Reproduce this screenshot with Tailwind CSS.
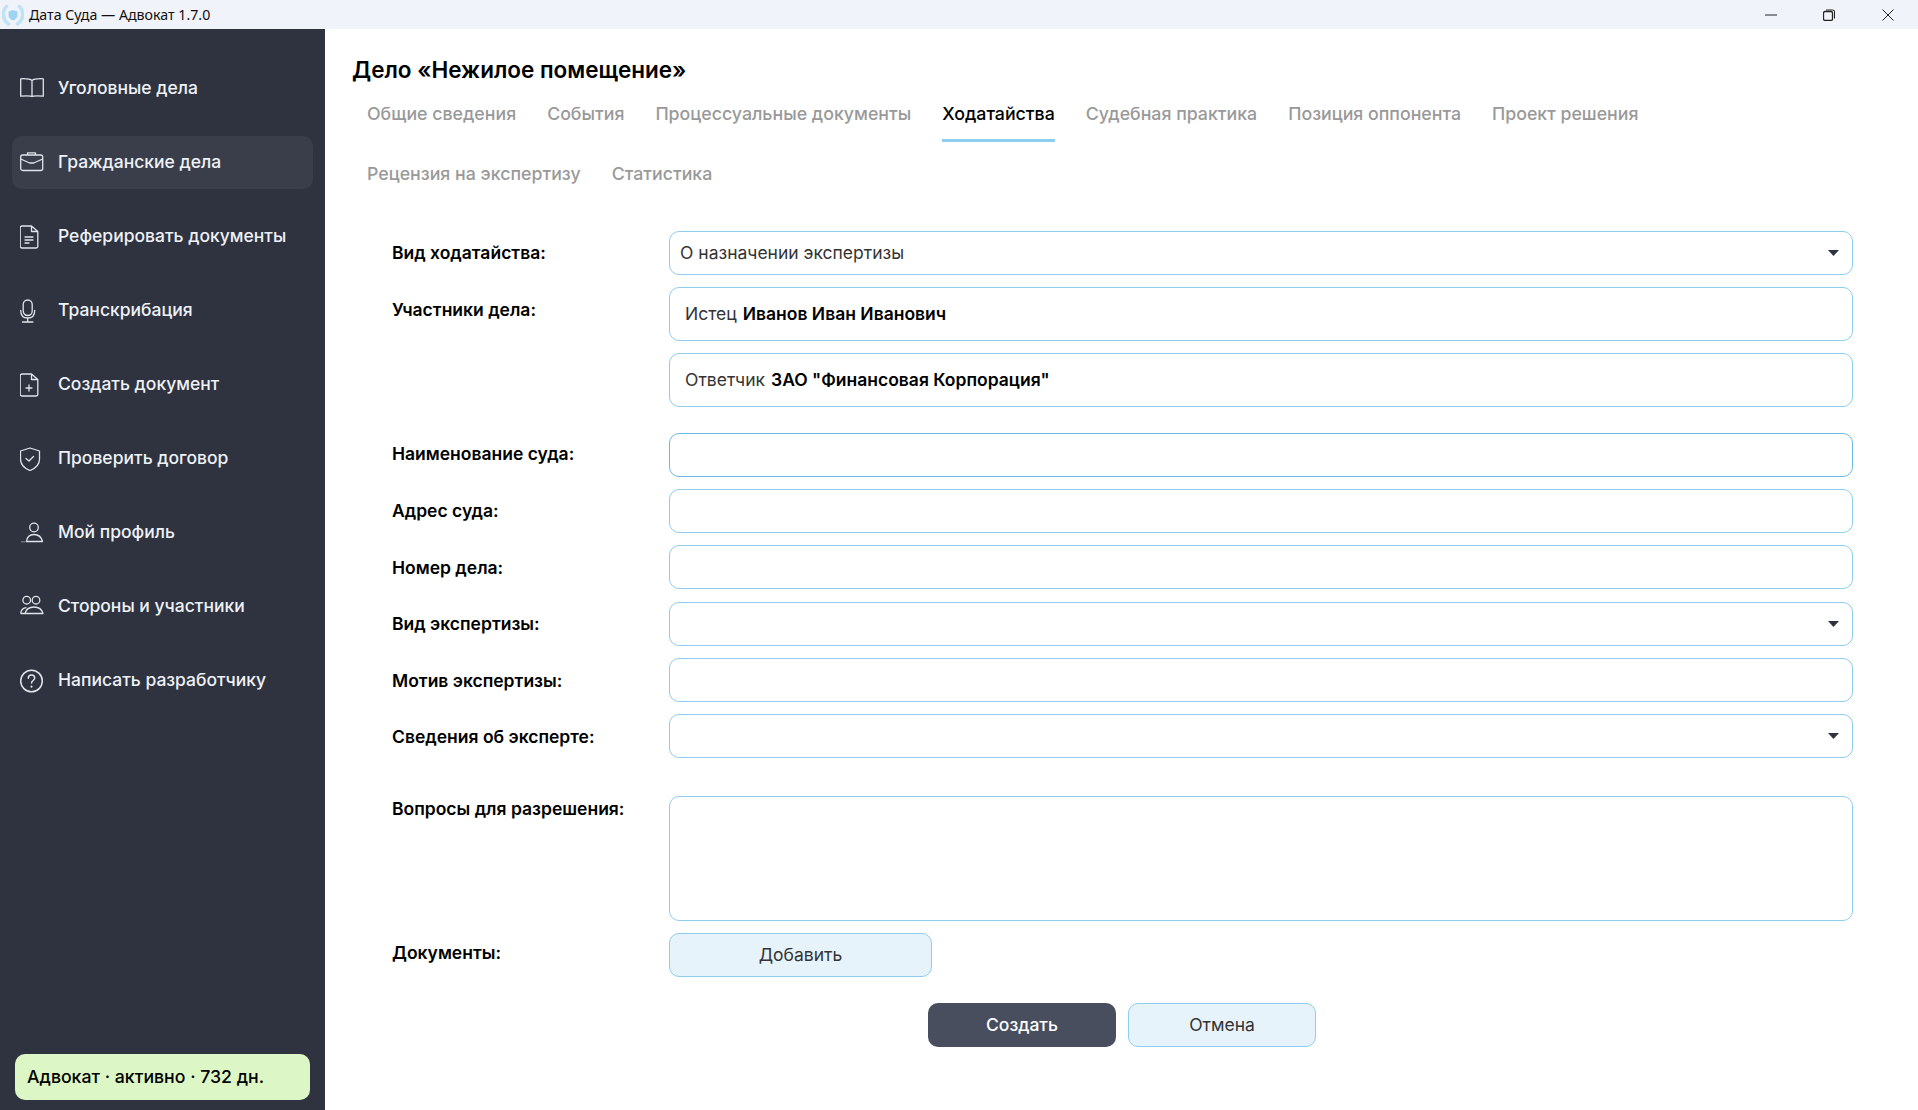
<!DOCTYPE html>
<html lang="ru"><head><meta charset="utf-8"><title>Дата Суда — Адвокат 1.7.0</title>
<script src="https://cdn.jsdelivr.net/npm/@tailwindcss/browser@4"></script></head>
<body class="m-0 h-[1110px] w-[1918px] overflow-hidden bg-white font-['Inter',sans-serif] text-[17.5px] text-black">
<header class="flex h-[29px] items-center bg-[#f0f3f9] pl-[2px]">
  <svg class="h-[22px] w-[22px]" viewBox="0 0 22 22" fill="none"><path d="M4.500 2.500C0 7 0 15.500 6.500 20M17.500 2.500c4.500 4.500 4.500 13-2 17.500" stroke="#bfe2f6" stroke-width="3.500" stroke-linecap="round"/><path d="M11 6l4.500 1.500v4c0 2.500-2.200 4-4.500 5-2.300-1-4.500-2.500-4.500-5v-4z" fill="#9ed4f2"/></svg>
  <span class="ml-[5px] font-['Noto_Sans',sans-serif] text-[14.2px] text-[#111]">Дата Суда — Адвокат 1.7.0</span>
  <div class="ml-auto flex items-center">
    <svg class="mr-[46px] h-[12px] w-[12px]" viewBox="0 0 12 12"><path d="M0 6h12" stroke="#222" stroke-width="1"/></svg>
    <svg class="mr-[47px] h-[12px] w-[12px]" viewBox="0 0 12 12" fill="none" stroke="#222"><rect x=".5" y="2.500" width="9" height="9" rx="1.500" stroke-width="1.300"/><path d="M3 1h6.500A1.800 1.800 0 0 1 11.500 3v6.500" stroke-width="1"/></svg>
    <svg class="mr-[24px] h-[12px] w-[12px]" viewBox="0 0 12 12"><path d="M.5.500l11 11M11.500.500l-11 11" stroke="#222" stroke-width="1"/></svg>
  </div>
</header>
<div class="flex h-[1081px]">
  <aside class="flex w-[325px] shrink-0 flex-col bg-[#2f333f] px-[12px] pt-[33px] pb-[10px] font-medium text-[#eef2f7]">
    <nav class="flex flex-col gap-[21px]">
      <a class="flex h-[53px] items-center gap-[14px] rounded-[10px] pl-[8px]"><svg class="h-[24px] w-[24px] shrink-0" viewBox="0 0 24 24" fill="none" stroke="#dfe4ea" stroke-width="1.300" stroke-linejoin="round"><path d="M12 3.500C10 1.800 6 1.500 .7 1.800v17.400C6 18.800 10 18.500 12 19.500c2-1 6-.7 11.300-.3V1.800C18 1.500 14 1.800 12 3.500zM12 3.500v16"/></svg>Уголовные дела</a>
      <a class="flex h-[53px] items-center gap-[14px] rounded-[10px] bg-[#3a3e4a] pl-[8px]"><svg class="h-[24px] w-[24px] shrink-0" viewBox="0 0 24 24" fill="none" stroke="#dfe4ea" stroke-width="1.300" stroke-linejoin="round"><rect x=".7" y="4" width="22" height="15.500" rx="2"/><path d="M7.500 4V1.800h8V4M.7 8l9 4h4l9-4"/></svg>Гражданские дела</a>
      <a class="flex h-[53px] items-center gap-[14px] rounded-[10px] pl-[8px]"><svg class="h-[24px] w-[24px] shrink-0" viewBox="0 0 24 24" fill="none" stroke="#dfe4ea" stroke-width="1.300" stroke-linejoin="round" stroke-linecap="round"><path d="M11.500 1H2a1.800 1.800 0 0 0-1.800 1.800v18.400A1.800 1.800 0 0 0 2 23h14a1.800 1.800 0 0 0 1.800-1.800V6.500zM11.500 1v5.500h6.300M5 12h8M5 15h8M5 18h4"/></svg>Реферировать документы</a>
      <a class="flex h-[53px] items-center gap-[14px] rounded-[10px] pl-[8px]"><svg class="h-[24px] w-[24px] shrink-0" viewBox="0 0 24 24" fill="none" stroke="#dfe4ea" stroke-width="1.300" stroke-linecap="round"><rect x="3.200" y="1" width="9" height="15.500" rx="4.500"/><path d="M.7 11.500c0 5 3 7.500 7 7.500s7-2.500 7-7.500M7.700 19v4M2.500 23h10.400"/></svg>Транскрибация</a>
      <a class="flex h-[53px] items-center gap-[14px] rounded-[10px] pl-[8px]"><svg class="h-[24px] w-[24px] shrink-0" viewBox="0 0 24 24" fill="none" stroke="#dfe4ea" stroke-width="1.300" stroke-linejoin="round" stroke-linecap="round"><path d="M11.500 1H2a1.800 1.800 0 0 0-1.800 1.800v18.400A1.800 1.800 0 0 0 2 23h14a1.800 1.800 0 0 0 1.800-1.800V6.500zM11.500 1v5.500h6.300M9 12v6M6 15h6"/></svg>Создать документ</a>
      <a class="flex h-[53px] items-center gap-[14px] rounded-[10px] pl-[8px]"><svg class="h-[24px] w-[24px] shrink-0" viewBox="0 0 24 24" fill="none" stroke="#dfe4ea" stroke-width="1.300" stroke-linejoin="round" stroke-linecap="round"><path d="M10 1l9.500 3v8c0 6-4.200 9.500-9.500 11.500C4.700 21.500.5 18 .5 12V4zM6 11.500l3 2.500 4.500-4.500"/></svg>Проверить договор</a>
      <a class="flex h-[53px] items-center gap-[14px] rounded-[10px] pl-[8px]"><svg class="h-[24px] w-[24px] shrink-0" viewBox="0 0 24 24" fill="none" stroke="#dfe4ea" stroke-width="1.300" stroke-linejoin="round"><circle cx="14" cy="6.500" r="4.300"/><path d="M6.500 20.500c.5-4 3-7 7.500-7s7.500 3 8.500 7z"/><path d="M1 20.800h5.500" stroke-width=".8" stroke="#9aa0ab"/></svg>Мой профиль</a>
      <a class="flex h-[53px] items-center gap-[14px] rounded-[10px] pl-[8px]"><svg class="h-[24px] w-[24px] shrink-0" viewBox="0 0 24 24" fill="none" stroke="#dfe4ea" stroke-width="1.300" stroke-linejoin="round"><circle cx="6.700" cy="5.200" r="3.800"/><circle cx="16" cy="5.200" r="3.800"/><path d="M5 18.500c1-4 4-6.500 9-6.500s8 2.500 9 6.500zM.7 18.500H5M.7 18.500c.3-3 2.500-5.500 5.800-5.800"/></svg>Стороны и участники</a>
      <a class="flex h-[53px] items-center gap-[14px] rounded-[10px] pl-[8px]"><svg class="h-[24px] w-[24px] shrink-0" viewBox="0 0 24 24" fill="none" stroke="#dfe4ea" stroke-width="1.500" stroke-linecap="round"><circle cx="11.500" cy="12" r="10.800"/><path d="M8.300 9.200c0-2 1.500-3.200 3.200-3.200s3.200 1.200 3.200 3c0 2.500-3.200 2.500-3.200 5"/><path d="M11.500 17.500v.3" stroke-width="2"/></svg>Написать разработчику</a>
    </nav>
    <div class="mx-[3px] mt-auto flex h-[46px] items-center rounded-[10px] bg-[#dcf7c5] pl-[12px] text-[17.7px] text-black">Адвокат · активно · 732 дн.</div>
  </aside>
  <main class="min-w-0 flex-1 pl-[27px] pr-[65px]">
    <h1 class="mt-[26px] text-[22.5px] leading-[30px] font-semibold">Дело «Нежилое помещение»</h1>
    <div class="flex h-[56px] items-start gap-[31px] pl-[15px] pt-[16px] text-[17.75px] font-medium text-[#999]">
      <span>Общие сведения</span><span>События</span><span>Процессуальные документы</span>
      <span class="h-[41px] border-b-[3px] border-[#8ecdf0] text-black">Ходатайства</span>
      <span>Судебная практика</span><span>Позиция оппонента</span><span>Проект решения</span>
    </div>
    <div class="flex h-[60px] items-center gap-[31px] pl-[15px] pt-[6px] text-[17.75px] font-medium text-[#999]"><span>Рецензия на экспертизу</span><span>Статистика</span></div>
    <form class="ml-[40px] mt-[30px] grid grid-cols-[277px_1fr] gap-y-[12px]">
      <label class="pt-[9px] font-semibold">Вид ходатайства:</label>
      <div class="flex h-[44px] items-center justify-between rounded-[10px] border border-[#8ecdf0] pl-[10px] pr-[13px] text-[#333]">О назначении экспертизы<svg class="h-[6px] w-[11px]" viewBox="0 0 11 6"><path d="M0 0h11L5.500 6z" fill="#2f333f"/></svg></div>
      <label class="pt-[10px] font-semibold">Участники дела:</label>
      <div class="flex flex-col gap-[12px]">
        <div class="flex h-[54px] items-center rounded-[10px] border border-[#8ecdf0] pl-[15px] text-[#333]">Истец<b class="ml-[6px] font-semibold text-black">Иванов Иван Иванович</b></div>
        <div class="flex h-[54px] items-center rounded-[10px] border border-[#8ecdf0] pl-[15px] text-[#333]">Ответчик<b class="ml-[6px] font-semibold text-black">ЗАО "Финансовая Корпорация"</b></div>
      </div>
      <label class="mt-[14px] pt-[8px] font-semibold">Наименование суда:</label>
      <div class="mt-[14px] h-[44px] rounded-[10px] border border-[#6cb9e6]"></div>
      <label class="pt-[9px] font-semibold">Адрес суда:</label>
      <div class="h-[44px] rounded-[10px] border border-[#8ecdf0]"></div>
      <label class="pt-[10px] font-semibold">Номер дела:</label>
      <div class="h-[44px] rounded-[10px] border border-[#8ecdf0]"></div>
      <label class="mt-[1px] pt-[9px] font-semibold">Вид экспертизы:</label>
      <div class="mt-[1px] flex h-[44px] items-center justify-end rounded-[10px] border border-[#8ecdf0] pr-[13px]"><svg class="h-[6px] w-[11px]" viewBox="0 0 11 6"><path d="M0 0h11L5.500 6z" fill="#2f333f"/></svg></div>
      <label class="pt-[10px] font-semibold">Мотив экспертизы:</label>
      <div class="h-[44px] rounded-[10px] border border-[#8ecdf0]"></div>
      <label class="pt-[10px] font-semibold">Сведения об эксперте:</label>
      <div class="flex h-[44px] items-center justify-end rounded-[10px] border border-[#8ecdf0] pr-[13px]"><svg class="h-[6px] w-[11px]" viewBox="0 0 11 6"><path d="M0 0h11L5.500 6z" fill="#2f333f"/></svg></div>
      <label class="mt-[26px] font-semibold">Вопросы для разрешения:</label>
      <div class="mt-[26px] h-[125px] rounded-[10px] border border-[#8ecdf0]"></div>
      <label class="pt-[7px] font-semibold">Документы:</label>
      <div class="flex h-[44px] w-[263px] items-center justify-center rounded-[10px] border border-[#8ecdf0] bg-[#e6f3fb] text-[#333]">Добавить</div>
    </form>
    <div class="mt-[26px] ml-[576px] flex gap-[12px]">
      <button class="h-[44px] w-[188px] rounded-[10px] bg-[#484e5e] font-medium text-white">Создать</button>
      <button class="h-[44px] w-[188px] rounded-[10px] border border-[#8ecdf0] bg-[#e6f3fb] text-[#333]">Отмена</button>
    </div>
  </main>
</div>
</body></html>
